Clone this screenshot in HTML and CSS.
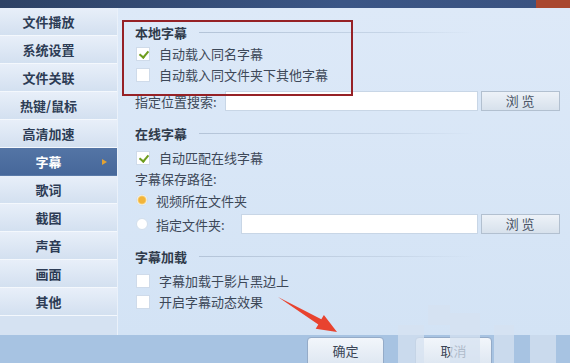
FILE: index.html
```html
<!DOCTYPE html>
<html lang="zh-CN">
<head>
    <meta charset="UTF-8">
    <title>字幕设置</title>
    <link rel="stylesheet" href="styles.css">
</head>
<body>
    <div class="window">
        <div class="titlebar"><span class="close-tab"></span></div>
        <div class="body">
            <ul class="nav">
                <li>文件播放</li>
                <li>系统设置</li>
                <li>文件关联</li>
                <li>热键/鼠标</li>
                <li>高清加速</li>
                <li class="active">字幕<span class="caret"></span></li>
                <li>歌词</li>
                <li>截图</li>
                <li>声音</li>
                <li>画面</li>
                <li>其他</li>
            </ul>
            <div class="panel">
                <div class="sec-title first"><span>本地字幕</span><i></i></div>
                <label class="row check-row tight"><span class="check on"></span>自动载入同名字幕</label>
                <label class="row check-row"><span class="check"></span>自动载入同文件夹下其他字幕</label>
                <div class="row field-row search">
                    <span class="field-label">指定位置搜索:</span>
                    <span class="input"></span>
                    <span class="btn">浏 览</span>
                </div>

                <div class="sec-title"><span>在线字幕</span><i></i></div>
                <label class="row check-row"><span class="check on"></span>自动匹配在线字幕</label>
                <div class="row">字幕保存路径:</div>
                <label class="row radio-row"><span class="radio on"></span>视频所在文件夹</label>
                <div class="row field-row folder">
                    <span class="radio"></span>
                    <span class="field-label">指定文件夹:</span>
                    <span class="input"></span>
                    <span class="btn">浏 览</span>
                </div>

                <div class="sec-title"><span>字幕加载</span><i></i></div>
                <label class="row check-row"><span class="check"></span>字幕加载于影片黑边上</label>
                <label class="row check-row"><span class="check"></span>开启字幕动态效果</label>
            </div>
        </div>
        <div class="footer">
            <span class="fbtn">确定</span>
            <span class="fbtn">取消</span>
        </div>

        <div class="highlight"></div>
        <div class="mosaic">
            <i style="left:30px;top:0;width:22px;height:20px"></i>
            <i style="left:0;top:20px;width:26px;height:38px"></i>
            <i style="left:52px;top:8px;width:30px;height:50px"></i>
            <i style="left:96px;top:20px;width:20px;height:38px"></i>
            <i style="left:132px;top:30px;width:26px;height:28px"></i>
        </div>
        <svg class="arrow" width="570" height="363" viewBox="0 0 570 363">
            <polygon points="278,297 321.3,319.2 323.9,314.9 337,332 315.7,328.7 318.3,324.4" fill="#e8432f"/>
        </svg>
    </div>
</body>
</html>
```

FILE: styles.css
```css
* { box-sizing: border-box; }
body { margin: 0; font-family: "Noto Sans CJK SC", "Noto Sans", sans-serif; font-size: 13px; color: #3d4858; }
.window { position: relative; width: 570px; height: 363px; overflow: hidden; display: flex; flex-direction: column; background: #dbe8f7; }

.titlebar { height: 8px; background: linear-gradient(90deg, #2e4265, #3b5686 60%, #3a5280); display: flex; justify-content: flex-end; }
.close-tab { width: 34px; background: #a9472f; }

.body { flex: 1; display: flex; }
.nav { list-style: none; margin: 0; padding: 0 0 19px; width: 118px; background: #d5e2f2; border-right: 1px solid #eaf1fa; }
.nav li { position: relative; height: 28px; line-height: 27px; padding-right: 20px; text-align: center; font-weight: bold; color: #2d3c55; background: linear-gradient(#e8eff9, #d3e0f0); border-bottom: 1px solid #f4f8fd; }
.nav li.active { background: linear-gradient(#5475a5, #46679a); color: #fff; border-bottom-color: #5a7aa8; }
.caret { position: absolute; left: 102px; top: 11px; width: 0; height: 0; border-left: 5px solid #e2a233; border-top: 3px solid transparent; border-bottom: 3px solid transparent; }

.panel { flex: 1; padding: 15px 0 0 17px; background: linear-gradient(#dde9f8, #d3e3f5); }
.sec-title { display: flex; align-items: center; height: 18px; margin-top: 12px; font-weight: bold; color: #2f3a4a; }
.sec-title.first { margin-top: 0; }
.sec-title i { height: 1px; width: 275px; margin-left: 12px; background: linear-gradient(90deg, #b4c4d8, #c6d5e7 70%, rgba(200,215,232,0)); }

.row { display: flex; align-items: center; height: 21px; }
.check-row { margin-top: 0; }
.tight { margin-top: 2px; }
.sec-title + .check-row:not(.tight) { margin-top: 5px; }
.check { width: 14px; height: 14px; margin: 0 9px 0 1px; background: #fff; border: 1px solid #cfdbea; position: relative; }
.check.on::after { content: ""; position: absolute; left: 4px; top: 1px; width: 4px; height: 7px; border: solid #6e9d1e; border-width: 0 2px 2px 0; transform: rotate(40deg); }

.radio-row { height: 22px; }
.radio { width: 12px; height: 12px; border-radius: 50%; margin: 0 8px 0 1px; background: #fff; border: 1px solid #d3dfec; flex: none; }
.radio.on { background: radial-gradient(circle, #f2b43a 0 3px, #f7d07a 4px, #fff 5px); }

.field-row { height: 22px; }
.search { margin-top: 5px; }
.folder { margin-top: 2px; }
.field-label { white-space: nowrap; }
.input { height: 20px; background: #fff; border: 1px solid #c8d6e6; }
.search .input { width: 253px; margin-left: 8px; }
.folder .field-label { margin-right: 16px; }
.folder .input { width: 237px; }
.btn { width: 79px; height: 20px; margin-left: 3px; text-align: center; line-height: 18px; font-size: 13px; color: #4a5566; background: linear-gradient(#edf2f8, #d7e1ec); border: 1px solid #b2c0d0; }

.footer { height: 28px; display: flex; gap: 31px; padding: 2px 0 0 307px; background: #a7c3e2; }
.fbtn { width: 77px; height: 30px; border-radius: 4px; border: 1px solid #94abc8; background: linear-gradient(#f2f6fb, #dde6f1); text-align: center; line-height: 26px; color: #3a4556; }

.highlight { position: absolute; left: 122px; top: 20px; width: 231px; height: 76px; border: 2px solid #962126; }
.mosaic { position: absolute; left: 398px; top: 305px; width: 172px; height: 58px; }
.mosaic i { position: absolute; background: rgba(214, 226, 240, 0.75); }
.arrow { position: absolute; left: 0; top: 0; }
```
